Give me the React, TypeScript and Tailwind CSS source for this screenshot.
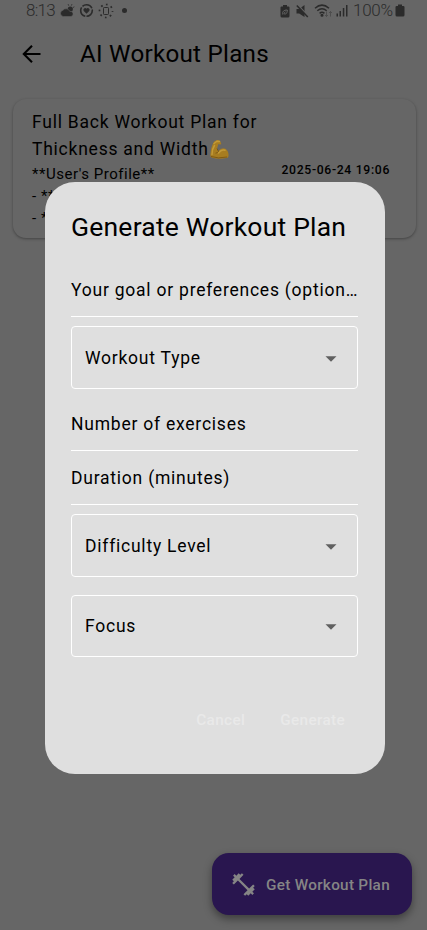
import type { ReactNode } from 'react';

function StatusBar() {
  return (
    <div className="flex h-[21px] items-center pl-[26px] pr-[22px] text-[#2b2b2b]">
      <span className="w-[30px] whitespace-nowrap text-[17px] font-light leading-[21px] tracking-[-0.7px]">8:13</span>
      <svg className="ml-[4px] h-[14px] w-[15px]" viewBox="0 0 15 14" fill="currentColor">
        <circle cx="10.300" cy="5" r="2.600" />
        <path d="M3.500 12.500a3.200 3.200 0 0 1-.5-6.300 4 4 0 0 1 6.800 1.200 2.600 2.600 0 1 1 1.200 5.100z" stroke="#666" strokeWidth=".5" />
        <path d="M8.700 1.600 8.200.3M11.400 1.500l.5-1.200M13.200 3.400l1.100-.6" stroke="currentColor" />
      </svg>
      <svg className="ml-[4px] h-[15px] w-[15px]" viewBox="0 0 15 15">
        <circle cx="7.500" cy="7.500" r="5.800" fill="none" stroke="currentColor" strokeWidth="1.600" strokeDasharray="10.900 1.250" strokeDashoffset="2" />
        <path d="M7.500 10.800 4.800 8a1.600 1.600 0 0 1 2.700-2.200A1.600 1.600 0 0 1 10.200 8z" fill="currentColor" />
      </svg>
      <svg className="ml-[4px] h-[16px] w-[16px]" viewBox="0 0 16 16" fill="none" stroke="currentColor">
        <rect x="5.500" y="4.500" width="5" height="7" rx=".8" />
        <circle cx="8" cy="8" r="6.500" strokeWidth="1.700" strokeDasharray="1.700 3.405" strokeDashoffset=".85" />
      </svg>
      <span className="ml-[8px] h-[5px] w-[5px] rounded-full bg-[#2b2b2b]" />
      <svg className="ml-auto h-[14px] w-[10px]" viewBox="0 0 10 14">
        <path d="M3 1h4v1.500h1.500q1 0 1 1V12q0 1.500-1.500 1.500H2Q.5 13.500.5 12V3.500q0-1 1-1H3z" fill="currentColor" />
        <path d="M2.700 10.500c-.5-3 1-4.500 4.600-4.500 0 3.500-1.500 4.700-3.600 3.600L5.500 7.800" fill="none" stroke="#666" strokeWidth="1" />
      </svg>
      <svg className="ml-[6px] h-[14px] w-[13px]" viewBox="0 0 13 14">
        <path d="M.5 5h2.700L8.500 1v12L3.200 9.500H.5z" fill="currentColor" />
        <path d="m1.800.8 11 12" stroke="#666" strokeWidth="1.500" />
        <path d="m.8 1.500 11 11.500" stroke="currentColor" strokeWidth="1.500" />
      </svg>
      <svg className="ml-[5px] h-[15px] w-[19px]" viewBox="0 0 19 15" fill="none" stroke="currentColor" strokeWidth="1.500">
        <path d="M1 5.200q7-6.200 14 0M3.300 7.800q4.700-4 9.400 0M5.600 10.300q2.400-2 4.800 0" />
        <circle cx="8" cy="12.300" r=".8" fill="currentColor" />
        <path d="M12.500 8.500v5m-1.500-1.500 1.500 1.500 1.500-1.500M16.500 13.500v-5M15 10l1.500-1.500L18 10" stroke="#484848" strokeWidth=".8" />
      </svg>
      <svg className="ml-[3px] h-[13px] w-[12px]" viewBox="0 0 12 13" fill="currentColor">
        <rect x=".5" y="9.500" width="1.500" height="3" />
        <rect x="3.500" y="7" width="1.500" height="5.500" />
        <rect x="6.800" y="4" width="1.500" height="8.500" />
        <rect x="10" y="1" width="1.500" height="11.500" />
      </svg>
      <span className="ml-[5px] w-[42px] whitespace-nowrap text-[17px] font-light leading-[21px] tracking-[-0.3px]">100%</span>
      <svg className="h-[13px] w-[10px]" viewBox="0 0 10 13" fill="currentColor">
        <path d="M3 .5h4V2h1.200Q9.500 2 9.500 3v8q0 1.500-1.500 1.500H2Q.5 12.500.5 11V3q0-1 1.300-1H3z" />
      </svg>
    </div>
  );
}

function TextLine({ label, className }: { label: string; className: string }) {
  return (
    <div className={`flex border-b border-white text-[17.500px] leading-[24px] tracking-[0.770px] ${className}`}>
      <span className="whitespace-nowrap">{label}</span>
    </div>
  );
}

function SelectBox({ children, className }: { children: ReactNode; className: string }) {
  return (
    <div className={`flex items-center justify-between rounded-[4px] border border-white pl-[13px] pr-[20px] text-[17.500px] leading-[24px] tracking-[0.770px] ${className}`}>
      <span>{children}</span>
      <svg className="mt-[2px] h-[6px] w-[12px]" viewBox="0 0 12 6" fill="#606060">
        <path d="M.5.3h11L6 5.700z" />
      </svg>
    </div>
  );
}

export default function App() {
  return (
    <div className="relative flex h-[930px] w-[427px] flex-col overflow-hidden bg-[#666] font-[Roboto,sans-serif] text-black">
      <StatusBar />
      <header className="flex h-[66px] items-center pl-[22px]">
        <svg className="h-[20px] w-[20px]" viewBox="0 0 20 20" fill="none" stroke="black" strokeWidth="2.100">
          <path d="M18.500 10H2.500M10 1.800 1.800 10l8.200 8.200" />
        </svg>
        <h1 className="ml-[38px] whitespace-nowrap text-[24.200px] leading-[30px] tracking-[0.250px]">AI Workout Plans</h1>
      </header>
      <article className="ml-[13px] mt-[12px] flex h-[139px] w-[403px] flex-col rounded-[13px] bg-[#666] pl-[19px] pt-[10px] shadow-[0_1px_3px_rgba(0,0,0,0.35)]">
        <h2 className="w-[240px] whitespace-nowrap text-[17.500px] leading-[27px] tracking-[0.760px]">
          Full Back Workout Plan for
          <br />
          Thickness and Width<span className="inline-block h-[21px] w-[20px] align-[-5px]">
            <svg className="h-[21px] w-[20px]" viewBox="0 0 20 21">
              <path d="M5.200 2.500 8 1q2-.5 3 1l1.200 2.300q.2 1.500-1.300 1.300l-1.500-.5-1.400 4.700 1.300 2.200q3.500-4 7-2.200 3.700 2.300 3.200 7.500-.2 1.700-2 1.800-8 1.600-14.500-.4-2-.7-1.700-3Q2 8 4.300 4z" fill="#a87d20" />
              <path d="M5 4.500 8 2.200l2.500.2M3 15.500Q3 10 5.500 6.500M9.500 14q3-4 6.500-2.700" fill="none" stroke="#c29a38" strokeWidth="1.500" strokeLinecap="round" />
              <path d="m8 9.500 1.500 3q-1 1.500-3 1.700M2 17.500q7 2.500 16 .5" fill="none" stroke="#76500f" strokeWidth=".8" />
            </svg>
          </span>
        </h2>
        <div className="flex justify-between pr-[26px]">
          <p className="whitespace-nowrap text-[15px] leading-[22px] tracking-[0.520px]">
            **User&#39;s Profile**
            <br />- **
            <br />- **
          </p>
          <time className="whitespace-nowrap text-[12.200px] font-medium leading-[14px] tracking-[0.680px]">2025-06-24 19:06</time>
        </div>
      </article>
      <button className="mb-[15px] ml-[212px] mt-auto flex h-[62px] w-[200px] items-center rounded-[17px] bg-[#29164f] pl-[18px] text-[15.300px] font-medium tracking-[0.290px] text-[#858585] shadow-[0_4px_9px_rgba(0,0,0,0.4)]">
        <svg className="h-[27px] w-[27px]" viewBox="0 0 24 24" fill="#858585">
          <path d="M20.570 14.860 22 13.430 20.570 12 17 15.570 8.430 7 12 3.430 10.570 2 9.140 3.430 7.710 2 5.570 4.140 4.140 2.710 2.710 4.140l1.430 1.430L2 7.710l1.430 1.430L2 10.570 3.430 12 7 8.430 15.570 17 12 20.570 13.430 22l1.430-1.430L16.290 22l2.140-2.140 1.430 1.430 1.430-1.430-1.430-1.430L22 16.290z" />
        </svg>
        <span className="ml-[9px] mt-[2px] whitespace-nowrap">Get Workout Plan</span>
      </button>

      <div className="absolute inset-0 flex items-start justify-center pl-[3px] pt-[182px]">
        <section role="dialog" className="flex h-[592px] w-[340px] flex-col rounded-[30px] bg-[#dfdfdf] pl-[26px] pr-[27px] pt-[27px]">
          <h2 className="whitespace-nowrap text-[26.500px] leading-[36px] tracking-[0.210px]">Generate Workout Plan</h2>
          <TextLine label="Your goal or preferences (option…" className="mt-[33px] h-[39px]" />
          <SelectBox className="mt-[9px] h-[63px]">Workout Type</SelectBox>
          <TextLine label="Number of exercises" className="mt-[23px] h-[39px]" />
          <TextLine label="Duration (minutes)" className="mt-[15px] h-[39px]" />
          <SelectBox className="mt-[9px] h-[63px]">Difficulty Level</SelectBox>
          <SelectBox className="mt-[18px] h-[62px]">Focus</SelectBox>
          <div className="mr-[13px] mt-[53px] flex justify-end gap-[35px] text-[15.300px] font-medium leading-[20px] tracking-[0.350px] text-[#e9e9e9]">
            <button>Cancel</button>
            <button>Generate</button>
          </div>
        </section>
      </div>
    </div>
  );
}
